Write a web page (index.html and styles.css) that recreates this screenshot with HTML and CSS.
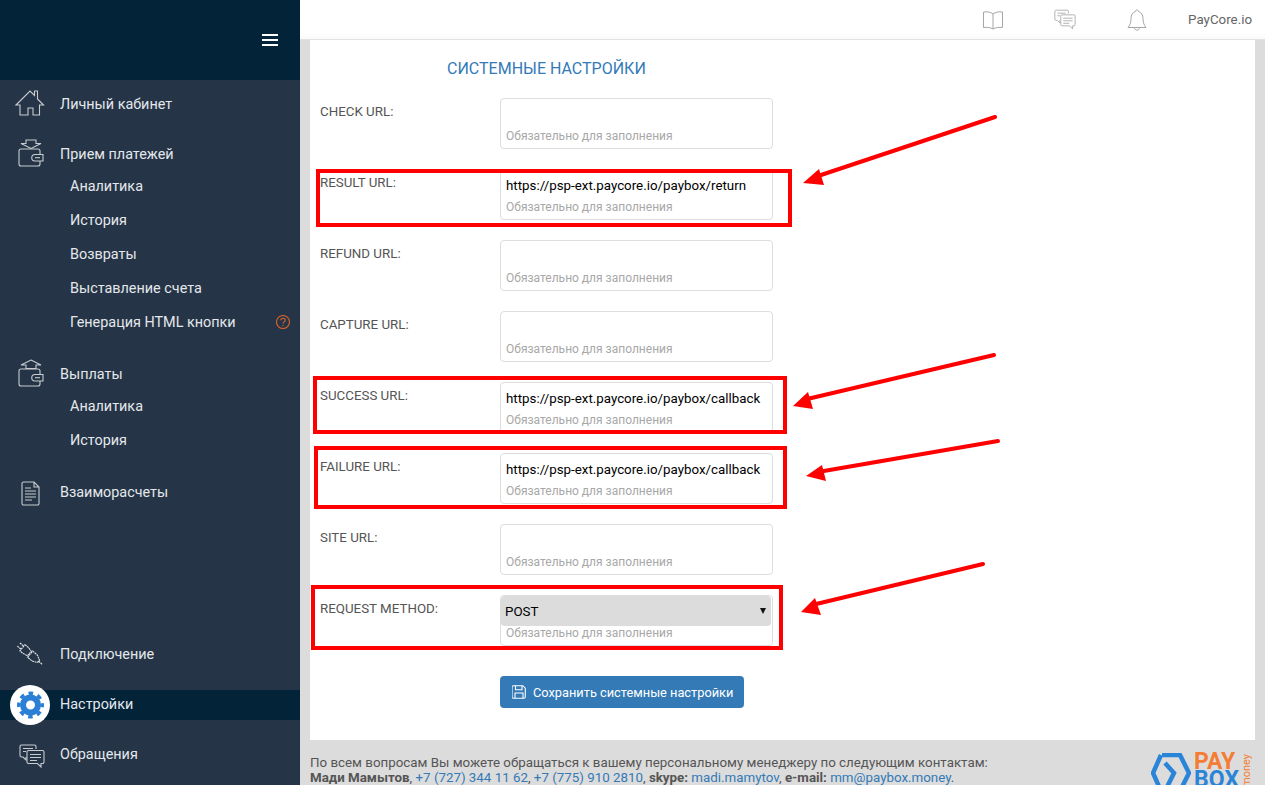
FILE: index.html
```html
<!DOCTYPE html>
<html lang="ru">
<head>
    <meta charset="UTF-8">
    <title>Системные настройки</title>
    <link rel="stylesheet" href="styles.css">
</head>
<body>
    <svg class="sprite" width="0" height="0">
        <symbol id="i-chat" viewBox="0 0 26 24">
            <path d="M17 5V2.500A1.500 1.500 0 0 0 15.500 1h-13A1.500 1.500 0 0 0 1 2.500v9A1.500 1.500 0 0 0 2.500 13H4l3 3v-3"/>
            <path d="M9.500 6.500h14A1.500 1.500 0 0 1 25 8v10a1.500 1.500 0 0 1-1.500 1.500H22V23l-3.500-3.500h-9A1.500 1.500 0 0 1 8 18V8a1.500 1.500 0 0 1 1.500-1.500z"/>
            <path d="M4 4.500h10M4 7.500h3M11 10.500h11M11 13.500h11M11 16.500h7"/>
        </symbol>
        <symbol id="i-wallet" viewBox="0 0 30 30">
            <path d="M25 15v-3a2 2 0 0 0-2-2H6a2 2 0 0 0-2 2v13a2 2 0 0 0 2 2h17a2 2 0 0 0 2-2v-3"/>
            <path d="M28 15.500H20a3.200 3.200 0 0 0 0 6.500h8z"/>
            <path d="M20 18.700h5"/>
        </symbol>
    </svg>

    <div class="app">
        <aside class="sidebar">
            <div class="sidebar-top">
                <svg class="burger" width="16" height="12" viewBox="0 0 16 12"><path d="M0 1h16M0 6h16M0 11h16"/></svg>
            </div>
            <nav class="nav">
                <a class="nav-item">
                    <svg class="nav-icon" viewBox="0 0 30 30"><path d="M1 16 15 2l4.500 4.500V2h3v8l6 6h-4v10h-6.500v-7h-5v7H5V16z"/></svg>
                    Личный кабинет
                </a>
                <div class="nav-group">
                    <a class="nav-item">
                        <svg class="nav-icon" viewBox="0 0 30 30">
                            <path d="M11 1h10v3.500h5L16 9.500 6 4.500h5z"/>
                            <use href="#i-wallet"/>
                        </svg>
                        Прием платежей
                    </a>
                    <a class="nav-sub">Аналитика</a>
                    <a class="nav-sub">История</a>
                    <a class="nav-sub">Возвраты</a>
                    <a class="nav-sub">Выставление счета</a>
                    <a class="nav-sub">Генерация HTML кнопки
                        <svg class="help" width="14" height="14" viewBox="0 0 14 14">
                            <circle cx="7" cy="7" r="6.500"/>
                            <path d="M4.800 5.300C4.800 2.600 9.200 2.600 9.200 5.200 9.200 6.800 7 6.900 7 8.800M7 10v1.300"/>
                        </svg>
                    </a>
                </div>
                <div class="nav-group">
                    <a class="nav-item">
                        <svg class="nav-icon" viewBox="0 0 30 30">
                            <path d="M16 1l10 5h-5v3.500H11V6H6z"/>
                            <use href="#i-wallet"/>
                        </svg>
                        Выплаты
                    </a>
                    <a class="nav-sub">Аналитика</a>
                    <a class="nav-sub">История</a>
                </div>
                <a class="nav-item">
                    <svg class="nav-icon" viewBox="0 0 30 30">
                        <path d="M8.500 5H19l5 5v16.500a1.500 1.500 0 0 1-1.500 1.500h-14A1.500 1.500 0 0 1 7 26.500v-20A1.500 1.500 0 0 1 8.500 5zM19 5v5h5"/>
                        <path d="M10 11h6M10 14h11M10 17h11M10 20h11M10 23h7"/>
                    </svg>
                    Взаиморасчеты
                </a>

                <div class="nav-bottom">
                    <a class="nav-item">
                        <svg class="nav-icon dotted" viewBox="0 0 30 30">
                            <g transform="rotate(40 15.500 15.500)">
                                <path d="M0 13.500h5M0 17.500h5M5 11.500h4l5 1v6l-5 1H5z"/>
                                <path d="M15 11.500h6l5 2.500v3l-5 2.500h-6zM26 15.500h5"/>
                            </g>
                        </svg>
                        Подключение
                    </a>
                    <a class="nav-item active">
                        <span class="gear-badge">
                            <svg width="40" height="40" viewBox="0 0 40 40">
                                <circle class="gear-body" cx="20.500" cy="20" r="7.500"/>
                                <circle class="gear-teeth" cx="20.500" cy="20" r="11.750"/>
                            </svg>
                        </span>
                        Настройки
                    </a>
                    <a class="nav-item">
                        <svg class="nav-icon" viewBox="0 0 30 30"><use href="#i-chat" x="4" y="5" width="26" height="24"/></svg>
                        Обращения
                    </a>
                </div>
            </nav>
        </aside>

        <div class="main">
            <header class="topbar">
                <div class="top-icons">
                    <svg class="top-icon" viewBox="0 0 24 24">
                        <path d="M12 6C9.500 3.800 6 3.600 2.500 4v15.500c3.500-.4 7-.2 9.500 1.500 2.500-1.700 6-1.900 9.500-1.500V4C18 3.600 14.500 3.800 12 6zM12 6v15"/>
                    </svg>
                    <svg class="top-icon" viewBox="0 0 24 24"><use href="#i-chat" x="1" y="1" width="22" height="21"/></svg>
                    <svg class="top-icon" viewBox="0 0 24 24">
                        <path d="M12 2c-1 0-1.500.7-1.500 1.500C7.500 4.500 6 7 6 10.500c0 4-1 6.500-3 9h18c-2-2.500-3-5-3-9 0-3.500-1.500-6-4.500-7C13.500 2.700 13 2 12 2zM9.500 19.500c0 3.500 5 3.500 5 0"/>
                    </svg>
                </div>
                <span class="top-user">PayCore.io</span>
            </header>

            <div class="content">
                <section class="panel">
                    <h2 class="panel-title">Системные настройки</h2>
                    <form class="settings">
                        <div class="row">
                            <label for="check">CHECK URL:</label>
                            <div class="field">
                                <input id="check" type="text">
                                <span class="hint">Обязательно для заполнения</span>
                            </div>
                        </div>
                        <div class="row">
                            <label for="result">RESULT URL:</label>
                            <div class="field">
                                <input id="result" type="text" value="https://psp-ext.paycore.io/paybox/return">
                                <span class="hint">Обязательно для заполнения</span>
                            </div>
                        </div>
                        <div class="row">
                            <label for="refund">REFUND URL:</label>
                            <div class="field">
                                <input id="refund" type="text">
                                <span class="hint">Обязательно для заполнения</span>
                            </div>
                        </div>
                        <div class="row">
                            <label for="capture">CAPTURE URL:</label>
                            <div class="field">
                                <input id="capture" type="text">
                                <span class="hint">Обязательно для заполнения</span>
                            </div>
                        </div>
                        <div class="row">
                            <label for="success">SUCCESS URL:</label>
                            <div class="field">
                                <input id="success" type="text" value="https://psp-ext.paycore.io/paybox/callback">
                                <span class="hint">Обязательно для заполнения</span>
                            </div>
                        </div>
                        <div class="row">
                            <label for="failure">FAILURE URL:</label>
                            <div class="field">
                                <input id="failure" type="text" value="https://psp-ext.paycore.io/paybox/callback">
                                <span class="hint">Обязательно для заполнения</span>
                            </div>
                        </div>
                        <div class="row">
                            <label for="site">SITE URL:</label>
                            <div class="field">
                                <input id="site" type="text">
                                <span class="hint">Обязательно для заполнения</span>
                            </div>
                        </div>
                        <div class="row">
                            <label for="method">REQUEST METHOD:</label>
                            <div class="field">
                                <div class="select-wrap">
                                    <select id="method">
                                        <option>POST</option>
                                        <option>GET</option>
                                    </select>
                                </div>
                                <span class="hint">Обязательно для заполнения</span>
                            </div>
                        </div>
                        <button class="save" type="button">
                            <svg width="14" height="14" viewBox="0 0 14 14">
                                <path d="M1.500.700h9.300l2.500 2.500v8.600a1.500 1.500 0 0 1-1.500 1.500h-10.300a1.500 1.500 0 0 1-1.500-1.500V2.200A1.500 1.500 0 0 1 1.500.700z"/>
                                <path d="M3.500.700v4h6.500v-4M3 13.300V8h8v5.300"/>
                            </svg>
                            Сохранить системные настройки
                        </button>
                    </form>
                </section>
            </div>

            <footer class="footer">
                <p class="contacts">
                    По всем вопросам Вы можете обращаться к вашему персональному менеджеру по следующим контактам:<br>
                    <b>Мади Мамытов</b>, <a>+7 (727) 344 11 62</a>, <a>+7 (775) 910 2810</a>, <b>skype:</b> <a>madi.mamytov</a>, <b>e-mail:</b> <a>mm@paybox.money</a>.
                </p>
                <div class="logo">
                    <svg width="40" height="40" viewBox="0 0 40 40">
                        <path d="M10 2 2 20l8 18M11 2h18l9 18-9 18H14M14 10l9 10-9 18"/>
                    </svg>
                    <div class="logo-text"><span class="logo-pay">PAY</span><span class="logo-box">BOX</span></div>
                    <span class="logo-money">money</span>
                </div>
            </footer>
        </div>
    </div>

    <!-- red marks drawn over the screenshot -->
    <svg class="marks" width="1265" height="785" viewBox="0 0 1265 785">
        <rect x="318" y="171" width="472" height="54"/>
        <rect x="315" y="378" width="470" height="54"/>
        <rect x="316" y="448" width="469" height="59"/>
        <rect x="313" y="587" width="468" height="61"/>
        <path d="M995 117 815 177M994 355 803 400M998 441 818 472M983 564 812 605"/>
        <polygon points="803,183 819,169 824,185"/>
        <polygon points="793,406 808,392 813,409"/>
        <polygon points="806,476 822,465 826,481"/>
        <polygon points="801,612 815,598 821,615"/>
    </svg>
</body>
</html>
```

FILE: styles.css
```css
* {
    box-sizing: border-box;
}
html, body {
    height: 100%;
    margin: 0;
    overflow: hidden;
}
body {
    font-family: Roboto, "Liberation Sans", sans-serif;
    font-size: 13.333px;
    color: #555;
    background-color: #dcdcdc;
}
.sprite {
    display: none;
}
.app {
    display: flex;
    height: 100vh;
}

/* sidebar */
.sidebar {
    display: flex;
    flex-direction: column;
    flex: 0 0 300px;
    background-color: #253446;
    color: #e4e8ec;
    font-size: 14.400px;
}
.sidebar-top {
    display: flex;
    flex: 0 0 80px;
    align-items: center;
    justify-content: flex-end;
    padding-right: 22px;
    background-color: #022338;
}
.burger path {
    stroke: #fff;
    stroke-width: 2;
    fill: none;
}
.nav {
    display: flex;
    flex: 1;
    flex-direction: column;
    gap: 20px;
    padding: 9px 0 15px;
}
.nav-group {
    display: flex;
    flex-direction: column;
}
.nav-bottom {
    display: flex;
    flex-direction: column;
    gap: 20px;
    margin-top: auto;
}
.nav-item {
    display: flex;
    align-items: center;
    height: 30px;
    padding-left: 15px;
}
.nav-bottom .nav-item {
    padding-bottom: 2px;
}
.nav-icon {
    flex: 0 0 30px;
    width: 30px;
    height: 30px;
    margin-right: 15px;
    fill: none;
    stroke: #c8ccd0;
    stroke-width: 1.100;
    overflow: visible;
}
.nav-icon.dotted {
    stroke: #e4e8ec;
    stroke-dasharray: 2 0.600;
}
.nav-sub {
    display: flex;
    align-items: center;
    height: 34px;
    padding: 0 10px 0 70px;
}
.help {
    margin-left: auto;
    fill: none;
    stroke: #d9622b;
    stroke-width: 1.100;
}
.nav-item.active {
    padding-left: 10px;
    background-color: #022338;
}
.gear-badge {
    flex: 0 0 40px;
    height: 40px;
    margin-top: 2px;
    margin-right: 10px;
    border-radius: 50%;
    background-color: #fff;
}
.gear-badge svg {
    display: block;
}
.gear-body {
    fill: none;
    stroke: #2b80d6;
    stroke-width: 6;
}
.gear-teeth {
    fill: none;
    stroke: #2b80d6;
    stroke-width: 3.500;
    stroke-dasharray: 4.610 4.610;
    stroke-dashoffset: 2.300;
}

/* top bar */
.main {
    display: flex;
    flex: 1;
    flex-direction: column;
    min-width: 0;
}
.topbar {
    display: flex;
    flex: 0 0 40px;
    align-items: center;
    justify-content: flex-end;
    padding-right: 13px;
    background-color: #fff;
    border-bottom: 1px solid #e2e2e2;
    box-shadow: inset 0 -8px 8px -8px rgba(0, 0, 0, 0.05);
}
.top-icons {
    display: flex;
    gap: 48px;
    margin-right: 39px;
}
.top-icon {
    width: 24px;
    height: 24px;
    fill: none;
    stroke: #a6a6a6;
    stroke-width: 1;
}
.top-user {
    color: #666;
}

/* form panel */
.content {
    flex: 1;
    padding: 0 10px;
    min-height: 0;
}
.panel {
    height: 100%;
    padding: 0 10px;
    background-color: #fff;
}
.panel-title {
    height: 58px;
    margin: 0 0 0 127px;
    padding-top: 19px;
    font-size: 16px;
    font-weight: 400;
    line-height: 20px;
    color: #337ab7;
    text-transform: uppercase;
}
.settings {
    display: flex;
    flex-direction: column;
    gap: 20px;
}
.row {
    display: flex;
}
.row label {
    flex: 0 0 180px;
    padding-top: 5px;
    line-height: 18px;
    color: #555;
}
.field {
    display: flex;
    flex-direction: column;
    width: 273px;
    height: 51px;
    padding: 6px 5px 4px;
    border: 1px solid #ddd;
    border-radius: 4px;
}
.field input {
    height: 20px;
    padding: 0;
    border: none;
    outline: none;
    font-family: inherit;
    font-size: 13.333px;
    color: #000;
}
.hint {
    margin-top: 4px;
    font-size: 12px;
    line-height: 16px;
    color: #a8a8a8;
}
.select-wrap {
    position: relative;
    margin: -6px -4px -5px -5px;
}
.select-wrap::after {
    content: "";
    position: absolute;
    top: 12px;
    right: 5px;
    border-left: 3.500px solid transparent;
    border-right: 3.500px solid transparent;
    border-top: 6px solid #111;
}
.select-wrap select {
    display: block;
    width: 100%;
    height: 30px;
    padding: 0 4px;
    border: none;
    border-radius: 4px;
    outline: none;
    appearance: none;
    background-color: #dcdcdc;
    font-family: inherit;
    font-size: 13.333px;
    color: #000;
}
.save {
    display: flex;
    align-items: center;
    gap: 7px;
    align-self: flex-start;
    height: 32px;
    margin: 10px 0 0 180px;
    padding: 0 11px 0 12px;
    border: none;
    border-radius: 4px;
    background-color: #337ab7;
    font-family: inherit;
    font-size: 12.800px;
    color: #fff;
}
.save svg {
    fill: none;
    stroke: #fff;
    stroke-width: 1.100;
}

/* footer */
.footer {
    display: flex;
    flex: 0 0 45px;
    justify-content: space-between;
    padding: 15px 13px 0 10px;
    overflow: hidden;
}
.contacts {
    margin: 0;
    line-height: 15px;
    white-space: nowrap;
}
.contacts a {
    color: #337ab7;
}
.logo {
    display: flex;
    margin-top: -2px;
}
.logo svg {
    flex: 0 0 40px;
    margin-right: 3px;
    fill: none;
    stroke: #2a84d8;
    stroke-width: 4.500;
}
.logo-text {
    display: flex;
    flex-direction: column;
    font-size: 23px;
    font-weight: 700;
    line-height: 18px;
}
.logo-pay {
    color: #f57c33;
}
.logo-box {
    color: #2a84d8;
}
.logo-money {
    margin-left: 2px;
    height: 34px;
    font-size: 11px;
    line-height: 11px;
    color: #f57c33;
    writing-mode: vertical-rl;
    transform: rotate(180deg);
}

/* annotations */
.marks {
    position: absolute;
    top: 0;
    left: 0;
    pointer-events: none;
}
.marks rect {
    fill: none;
    stroke: #f00;
    stroke-width: 4;
}
.marks path {
    fill: none;
    stroke: #f00;
    stroke-width: 4;
    stroke-linecap: round;
}
.marks polygon {
    fill: #f00;
}
```
